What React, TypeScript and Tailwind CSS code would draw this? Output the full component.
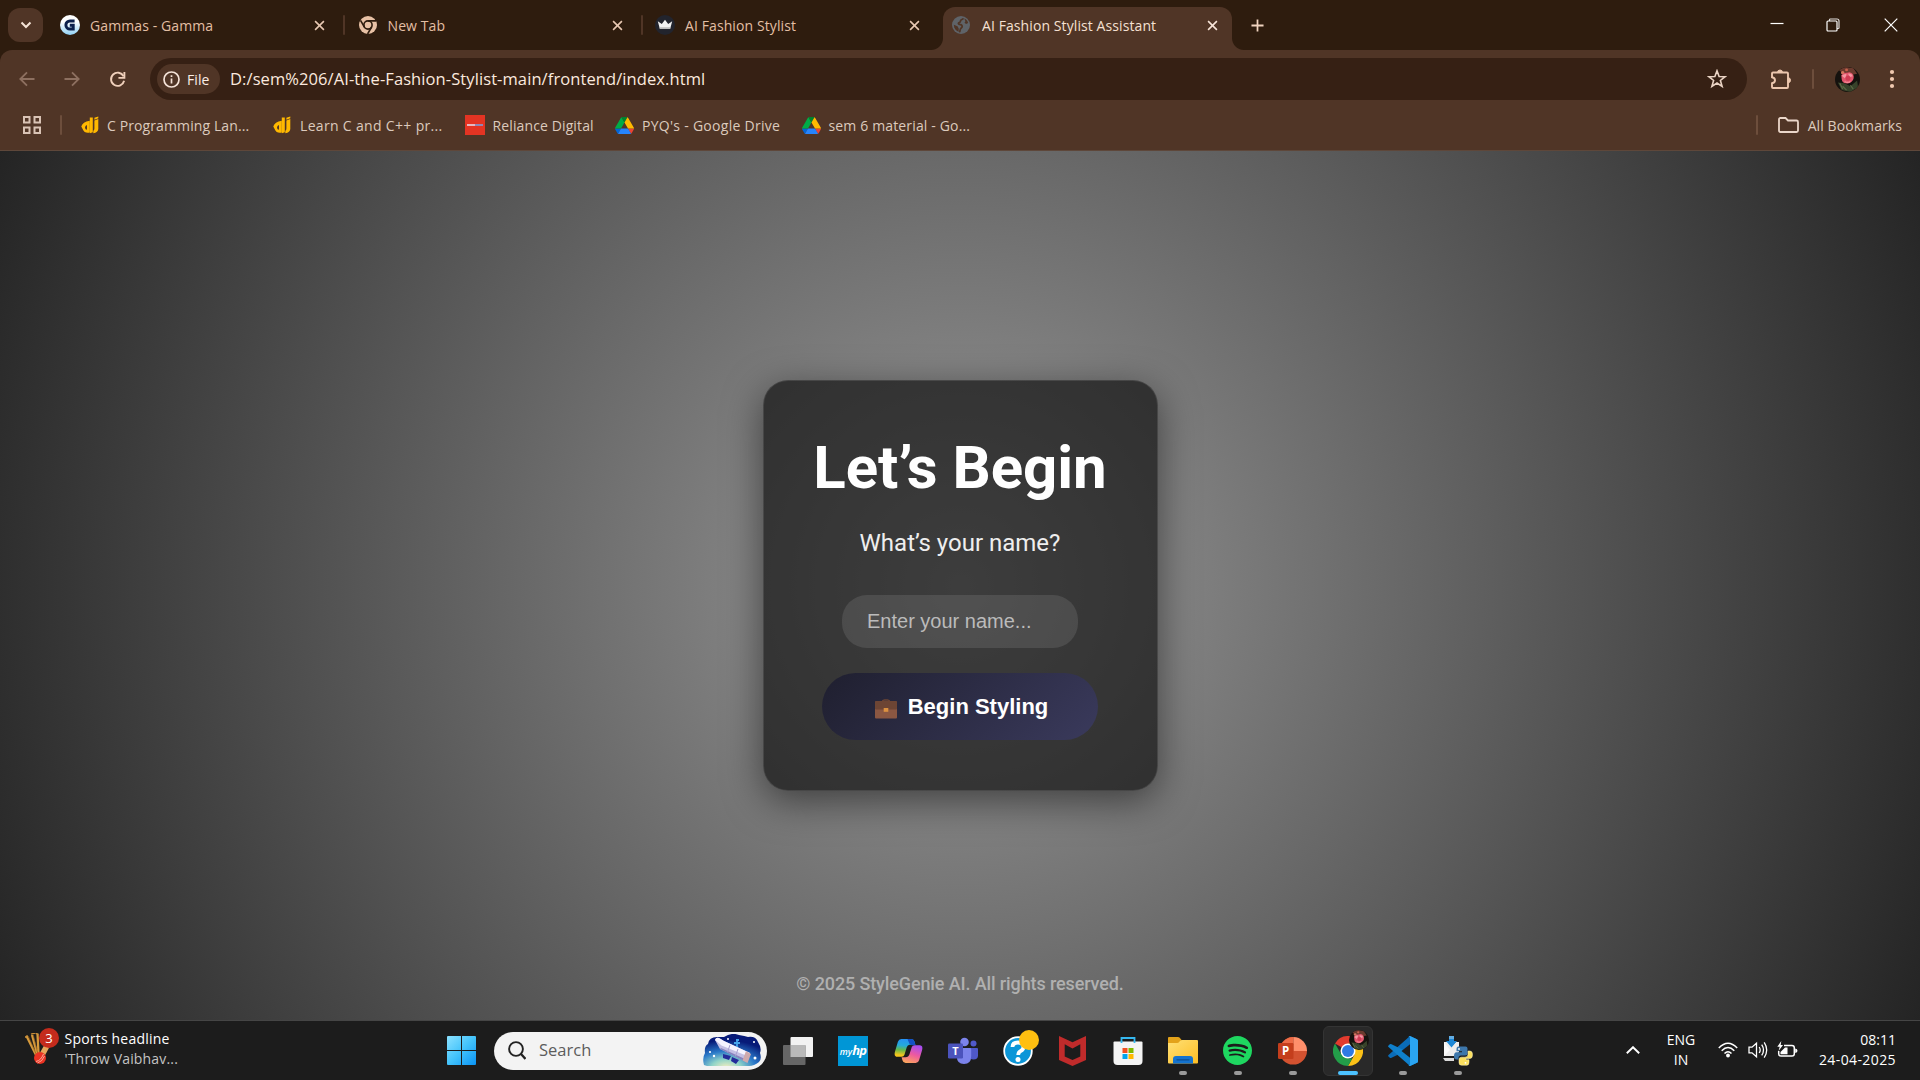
import React from 'react';
import { SiSpotify } from 'react-icons/si';

const CloseX = ({ className = '' }: { className?: string }) => (
  <svg viewBox="0 0 12 12" className={`size-[11px] ${className}`} fill="none" stroke="currentColor" strokeWidth="1.7">
    <path d="M1.2 1.2l9.6 9.6M10.8 1.2L1.2 10.8" />
  </svg>
);

const GammaIcon = () => (
  <svg viewBox="0 0 20 20" className="size-5">
    <defs>
      <linearGradient id="gm" x1="0" y1="0" x2="0" y2="1">
        <stop offset="0.35" stopColor="#fff" />
        <stop offset="1" stopColor="#8fd0f5" />
      </linearGradient>
    </defs>
    <circle cx="10" cy="10" r="10" fill="url(#gm)" />
    <path d="M14.6 5.900H10A4 4 0 0 0 10 14.100H13.200V10.300H9.800" fill="none" stroke="#0b1f4b" strokeWidth="3" />
  </svg>
);

const ChromeMono = () => (
  <svg viewBox="0 0 18 18" className="size-[18px]">
    <circle cx="9" cy="9" r="9" fill="#e8c1a5" />
    <circle cx="9" cy="9" r="4.1" fill="none" stroke="#2e1c0e" strokeWidth="1.6" />
    <path d="M9 4.9h8M5.4 11L1.5 4.3M12.6 11l-4 7" stroke="#2e1c0e" strokeWidth="1.6" />
  </svg>
);

const CrownIcon = () => (
  <svg viewBox="0 0 20 20" className="size-5">
    <circle cx="10" cy="10" r="10" fill="#22242d" />
    <path d="M2.8 6.2L6.8 9 10 4.7 13.2 9l4-2.8-2 7.6H4.8z" fill="#f2f2f2" />
    <path d="M4.5 12.2h11l-.4 1.8H4.9z" fill="#bdbdbd" />
  </svg>
);

const GlobeIcon = () => (
  <svg viewBox="0 0 18 18" className="size-[18px]">
    <circle cx="9" cy="9" r="9" fill="#5f6368" />
    <path
      d="M11.300 2.200C11 3.600 9.500 3.400 8.800 4.300 8.200 5.200 8.700 6.300 7.300 6.600 5.800 6.900 6.300 8.200 7.500 8.400 9.400 8.600 10.300 9.200 10.200 10.600 10.100 12 8.500 12 8.300 13.400 8.200 14.700 8 15.500 7.200 16.200"
      fill="none"
      stroke="#503526"
      strokeWidth="1.700"
    />
    <path d="M1.800 8.800l3.700 1.400 1.300 2.600-.3 3C3.900 14.700 1.900 12.300 1.800 8.800z" fill="#503526" />
    <path d="M12.300 2.500c2 .9 3.300 2.500 3.800 4.600l-2 1-1.600-1.300.9-1.600z" fill="#503526" />
  </svg>
);

type TabProps = { icon: React.ReactNode; title: string; sep?: boolean };
const Tab = ({ icon, title, sep }: TabProps) => (
  <div className="flex h-[50px] w-[297.500px] items-center">
    <div className="flex w-5 justify-center">{icon}</div>
    <div className="ml-2.5 w-[224px] pt-px text-[14px] tracking-[0.100px] text-[#e3bfa4]">{title}</div>
    <CloseX className="mr-px text-[#e8c8b2]" />
    {sep ? <div className="ml-[17px] h-5 w-[2px] rounded bg-[#503526]" /> : null}
  </div>
);

const TabStrip = () => (
  <div className="flex h-[50px] items-center bg-[#2e1c0e]">
    <div className="ml-2 flex h-[34px] w-[35px] items-center justify-center rounded-xl bg-[#503526]">
      <svg viewBox="0 0 12 8" className="h-2 w-3" fill="none" stroke="#f5e3d6" strokeWidth="2">
        <path d="M1.500 1.500L6 6l4.500-4.500" />
      </svg>
    </div>
    <div className="ml-[17px] flex">
      <Tab icon={<GammaIcon />} title="Gammas - Gamma" sep />
      <Tab icon={<ChromeMono />} title="New Tab" sep />
      <Tab icon={<CrownIcon />} title="AI Fashion Stylist" />
    </div>
    <div className="-ml-[22px] flex h-[50px] items-end">
      <div className="h-3 w-3 bg-[radial-gradient(circle_at_0_0,transparent_11.500px,#503526_12.500px)]" />
      <div className="flex h-[43px] w-[289.500px] items-center rounded-t-xl bg-[#503526] pl-[9.500px] pb-[7px]">
        <GlobeIcon />
        <div className="ml-3 w-[224.500px] pt-px text-[14px] tracking-[0.090px] text-[#f5e0d2]">AI Fashion Stylist Assistant</div>
        <CloseX className="text-[#f7e4d8]" />
      </div>
      <div className="h-3 w-3 bg-[radial-gradient(circle_at_100%_0,transparent_11.500px,#503526_12.500px)]" />
    </div>
    <svg viewBox="0 0 14 14" className="ml-[6.500px] size-[13px]" stroke="#f0d3bf" strokeWidth="1.900">
      <path d="M7 .5v13M.5 7h13" />
    </svg>
    <div className="ml-auto mr-[22px] flex items-center text-white">
      <svg viewBox="0 0 14 14" className="size-3.5" stroke="currentColor" strokeWidth="1.200">
        <path d="M.5 5.500h13" />
      </svg>
      <svg viewBox="0 0 14 14" className="ml-[42px] size-3.5" fill="none" stroke="currentColor" strokeWidth="1.200">
        <rect x="1" y="3" width="10" height="10" rx="1" />
        <path d="M3.500 3V1.800q0-.8.8-.8H11q2 0 2 2v6.700q0 .8-.8.8H11" strokeOpacity="0.85" />
      </svg>
      <svg viewBox="0 0 14 14" className="ml-11 size-3.5" stroke="currentColor" strokeWidth="1.200">
        <path d="M.7.7l12.600 12.600M13.300.7L.7 13.300" />
      </svg>
    </div>
  </div>
);

const RosePhoto = ({ className }: { className: string }) => (
  <svg viewBox="0 0 26 26" className={className}>
    <defs>
      <clipPath id="rp">
        <circle cx="13" cy="13" r="13" />
      </clipPath>
    </defs>
    <g clipPath="url(#rp)">
      <rect width="26" height="26" fill="#15120e" />
      <path d="M4 3l6-3 9 1 4 6-5 1-9-1z" fill="#6b3a2e" />
      <path d="M3 16l7 1 6 3 7-6 1 7-8 5-9-2z" fill="#37422a" />
      <path d="M8 20l4 4M16 19l3 4M5 17l3 6" stroke="#5c6b45" strokeWidth="1.200" />
      <circle cx="8" cy="6" r="1.800" fill="#d2765f" />
      <circle cx="12" cy="3" r="1.500" fill="#c4614c" />
      <path d="M6.500 8.500q3-3 6-2.500 4-2 6.500 2 1.500 4-1.500 7-3 3-6 2-4-.5-4.500-4z" fill="#e0566c" />
      <path d="M7 9q3-2.500 5-1.500L10.500 12zM13.500 7q4-1 5 2.500l-3 1z" fill="#f596a0" />
      <circle cx="13.500" cy="11.800" r="2.600" fill="#cf3c54" />
      <path d="M10 15q3 2 6 0" stroke="#f28b97" strokeWidth="1.200" fill="none" />
    </g>
  </svg>
);

const AddressRow = () => (
  <div className="flex h-[58px] items-center bg-[#503526] pl-[19px]">
    <svg viewBox="0 0 16 16" className="size-4 text-[#8d7060]" fill="none" stroke="currentColor" strokeWidth="1.800">
      <path d="M15.500 8H1.500M8 1.300L1.300 8 8 14.700" />
    </svg>
    <svg viewBox="0 0 16 16" className="ml-[29px] size-4 text-[#8d7060]" fill="none" stroke="currentColor" strokeWidth="1.800">
      <path d="M.5 8h14M8 1.300L14.700 8 8 14.700" />
    </svg>
    <svg viewBox="0 0 18 18" className="ml-[29px] size-[17px] text-[#f0d0bb]" fill="none" stroke="currentColor" strokeWidth="2">
      <path d="M15.400 5.500A7 7 0 1 0 16 10.300" />
      <path d="M16.300 1v6.300H10" />
    </svg>
    <div className="ml-6 flex h-[42px] w-[1597px] items-center rounded-full bg-[#362014] pl-[7px]">
      <div className="flex h-[30px] w-[63px] items-center rounded-full bg-[#503526] pl-1.5">
        <svg viewBox="0 0 17 17" className="size-[17px] text-[#f5e3d8]" fill="none" stroke="currentColor" strokeWidth="1.700">
          <circle cx="8.500" cy="8.500" r="7.500" />
          <path d="M8.500 7.500v5M8.500 4.300v1.800" />
        </svg>
        <span className="ml-[7px] text-[14px] font-medium tracking-[0.1px] text-[#fbeee6]">File</span>
      </div>
      <div className="ml-2.5 flex-1 pt-px text-[16.500px] tracking-[0.090px] text-[#fbe9df]">
        D:/sem%206/AI-the-Fashion-Stylist-main/frontend/index.html
      </div>
      <svg viewBox="0 0 20 20" className="mr-5 size-5 text-[#ead3c4]" fill="none" stroke="currentColor" strokeWidth="1.600">
        <path d="M10 1.800l2.100 5.700 6 .2-4.700 3.800 1.700 5.900L10 14l-5.100 3.400 1.700-5.900L1.900 7.700l6-.2z" />
      </svg>
    </div>
    <svg viewBox="0 0 22 22" className="ml-[23px] size-[22px]">
      <path
        d="M3 4.500h14q1 0 1 1V19q0 1-1 1H3q-1 0-1-1v-3.800q3-.5 3-3t-3-3V5.500q0-1 1-1z"
        fill="none"
        stroke="#ecc6ad"
        strokeWidth="1.900"
      />
      <path d="M7.500 4.500a2.500 2.500 0 0 1 5 0zM18 9.700a2.500 2.500 0 0 1 0 5z" fill="#ecc6ad" stroke="#ecc6ad" />
    </svg>
    <div className="ml-5 h-5 w-[2px] rounded bg-[#6d4e3c]" />
    <RosePhoto className="ml-[21px] size-[25px]" />
    <svg viewBox="0 0 6 20" className="ml-[29px] h-5 w-1.5" fill="#f0c9b0">
      <circle cx="3" cy="3" r="2.100" />
      <circle cx="3" cy="10" r="2.100" />
      <circle cx="3" cy="17" r="2.100" />
    </svg>
  </div>
);

const GfgLogo = () => (
  <svg viewBox="0 0 18 18" className="size-[18px]">
    <path d="M8.800 1.500h3v14.800L8.800 17.200z" fill="#ffb800" />
    <path d="M.3 10.500Q1.500 6 8.800 4.800V16.600Q3.500 17.600 2 13.800zM6 9Q4 9.900 4 11.700q.2 2 2 2z" fill="#ffb800" fillRule="evenodd" />
    <path d="M13.400 4.600L17.300 3v10q-.2 3.500-5 4.300v-2.600q1.100-.5 1.100-2.200zM13.400 1.800L17.300.4v1.900l-3.900 1.400z" fill="#ffb800" />
  </svg>
);

const DriveLogo = () => (
  <svg viewBox="0 0 87.300 78" className="h-[17px] w-[19px]">
    <path d="m6.600 66.850 3.850 6.650c.8 1.400 1.950 2.500 3.300 3.300l13.750-23.800h-27.500c0 1.550.4 3.100 1.200 4.500z" fill="#0066da" />
    <path d="m43.650 25-13.750-23.800c-1.350.8-2.500 1.900-3.300 3.300l-25.400 44a9.060 9.060 0 0 0 -1.200 4.500h27.500z" fill="#00ac47" />
    <path d="m73.550 76.800c1.350-.8 2.500-1.900 3.300-3.300l1.600-2.750 7.650-13.250c.8-1.400 1.200-2.950 1.200-4.500h-27.502l5.852 11.500z" fill="#ea4335" />
    <path d="m43.650 25 13.750-23.800c-1.350-.8-2.900-1.200-4.500-1.200h-18.500c-1.600 0-3.150.45-4.500 1.200z" fill="#00832d" />
    <path d="m59.800 53h-32.300l-13.750 23.800c1.350.8 2.900 1.200 4.500 1.200h50.800c1.600 0 3.150-.45 4.500-1.200z" fill="#2684fc" />
    <path d="m73.400 26.500-12.700-22c-.8-1.400-1.950-2.500-3.300-3.300l-13.750 23.800 16.150 28h27.450c0-1.550-.4-3.100-1.200-4.500z" fill="#ffba00" />
  </svg>
);

const BookmarksBar = () => (
  <div className="flex h-[42px] items-center bg-[#503526] pb-2 pl-[23px] text-[14px] text-[#dccabd]">
    <svg viewBox="0 0 18 18" className="size-[18px]" fill="none" stroke="#d9c3b5" strokeWidth="2">
      <path d="M1 1h5.500v5.500H1zM11.500 1H17v5.500h-5.500zM1 11.500h5.500V17H1zM11.500 11.500H17V17h-5.500z" />
    </svg>
    <div className="ml-[19px] h-5 w-[2px] rounded bg-[#6d4e3c]" />
    <div className="ml-[19px] flex w-[192px] items-center">
      <GfgLogo />
      <span className="ml-[8px] tracking-[0.110px]">C Programming Lan...</span>
    </div>
    <div className="flex w-[191.500px] items-center">
      <GfgLogo />
      <span className="ml-[9px] tracking-[0.330px]">Learn C and C++ pr...</span>
    </div>
    <div className="flex w-[150.500px] items-center">
      <div className="flex size-5 items-center justify-center bg-[#e43423]">
        <div className="flex h-[2px] w-4">
          <div className="w-2 bg-[#e9b5bd]" />
          <div className="w-2 bg-[#8f86b5]" />
        </div>
      </div>
      <span className="ml-2 tracking-[0.120px]">Reliance Digital</span>
    </div>
    <div className="flex w-[186.500px] items-center">
      <DriveLogo />
      <span className="ml-2 tracking-[0.280px]">PYQ's - Google Drive</span>
    </div>
    <div className="flex items-center">
      <DriveLogo />
      <span className="ml-2 tracking-[0.150px]">sem 6 material - Go...</span>
    </div>
    <div className="ml-auto mr-[18px] flex items-center">
      <div className="h-5 w-[2px] rounded bg-[#6d4e3c]" />
      <svg viewBox="0 0 21 16" className="ml-5 h-4 w-[21px]" fill="none" stroke="#ead6c9" strokeWidth="1.800">
        <path d="M2.500 1H7.500l2.500 2.500h8.500q1.500 0 1.500 1.500v8.500q0 1.500-1.500 1.500h-16Q1 15 1 13.500v-11Q1 1 2.500 1z" />
      </svg>
      <span className="ml-[9px] tracking-[0.080px]">All Bookmarks</span>
    </div>
  </div>
);

const LoginPage = () => (
  <div className="flex h-[869px] flex-col items-center bg-[radial-gradient(circle_at_center,#999,#242424)] font-['Roboto',sans-serif]">
    <div className="mt-[229px] flex h-[411px] w-[395px] flex-col items-center rounded-[25px] border border-white/10 bg-black/60 pt-[52px] shadow-[0_10px_38px_rgba(0,0,0,0.500)]">
      <h1 className="text-[60px] leading-[70px] font-bold tracking-[-0.050px] whitespace-nowrap text-white">Let’s Begin</h1>
      <p className="mt-[26px] text-[24px] leading-7 text-[#eee]">What’s your name?</p>
      <input
        className="mt-[38px] h-[53px] w-[236px] rounded-[25px] bg-white/10 px-[25px] font-['Liberation_Sans',sans-serif] text-[20px] text-white placeholder:text-[#bbb]"
        placeholder="Enter your name..."
      />
      <button className="mt-[25px] flex h-[67px] w-[276px] items-center justify-center gap-[10px] rounded-[37px] bg-linear-[135deg,#1f1f2f,#3a3a5c] pl-0.5 font-['Liberation_Sans',sans-serif] text-[22px] font-bold text-white">
        <svg viewBox="0 0 24 20" className="mt-1 h-5 w-6">
          <path d="M8 3Q8.500 1 10.500 1h3Q15.500 1 16 3" fill="none" stroke="#6d4534" strokeWidth="1.400" />
          <rect x="1" y="2.500" width="22" height="17" rx="1" fill="#8b5742" />
          <path d="M2 2h20q1 0 1 1v6.500q0 1-1 1H2q-1 0-1-1V3q0-1 1-1z" fill="#6d4534" />
          <rect x="9.700" y="9" width="4.600" height="3.800" fill="#dc9140" />
        </svg>
        Begin Styling
      </button>
    </div>
    <div className="mt-auto mb-[26px] text-[18px] leading-[21px] font-medium tracking-[-0.120px] text-[#b0b0b0]">
      © 2025 StyleGenie AI. All rights reserved.
    </div>
  </div>
);

type AppProps = { children: React.ReactNode; running?: boolean; active?: boolean };
const TaskApp = ({ children, running, active }: AppProps) => (
  <div
    className={
      active
        ? 'relative flex size-[50px] items-center justify-center rounded-md border border-[#343434] bg-[#292929]'
        : 'relative flex size-[50px] items-center justify-center'
    }
  >
    {children}
    {running ? <div className="absolute bottom-px left-[21px] h-1 w-2 rounded-full bg-[#9a9a9a]" /> : null}
    {active ? <div className="absolute bottom-0 left-[14px] h-1 w-5 rounded-full bg-[#4cc2ff]" /> : null}
  </div>
);

const WindowsLogo = () => (
  <svg viewBox="0 0 29 29" className="size-[29px]">
    <defs>
      <linearGradient id="wl" x1="0" y1="0" x2="1" y2="1">
        <stop offset="0" stopColor="#8ce2ff" />
        <stop offset="0.500" stopColor="#43c3fb" />
        <stop offset="1" stopColor="#0a93f5" />
      </linearGradient>
    </defs>
    <path d="M1 0h13v14H0V1q0-1 1-1zM15 0h13q1 0 1 1v13H15zM0 15h14v14H1q-1 0-1-1zM15 15h14v13q0 1-1 1H15z" fill="url(#wl)" />
  </svg>
);

const Telescope = () => (
  <svg viewBox="0 0 58 33" className="h-[33px] w-[58px]">
    <defs>
      <radialGradient id="ts" cx="0.400" cy="1.050" r="0.850">
        <stop offset="0" stopColor="#f6efc0" />
        <stop offset="0.300" stopColor="#8fd3c8" />
        <stop offset="0.600" stopColor="#2a79c9" />
        <stop offset="1" stopColor="#071a78" />
      </radialGradient>
    </defs>
    <path d="M1 31Q-1 24 2 19 1 12 5 10 6 3 14 3q5 0 7 0Q29-2 36 1q6 1 9 2 8-1 10 5 4 6 2 11 2 6-1 9-5 4-10 4H4z" fill="url(#ts)" />
    <path d="M34 5v8M31 9h6M33 6h3" stroke="#45a5ec" strokeWidth="1.800" />
    <path d="M12 6q1-3 4-2l5 3 26 12-3 9-27-13z" fill="#c3bfe4" />
    <path d="M12 6q1-3 4-2l5 3 26 12-1.500 3.500-27-11z" fill="#f5f3ff" />
    <path d="M18 14l24 11-.7 2L17 15z" fill="#8783bf" />
    <path d="M43 17l5 3-3.500 9-5-2.500z" fill="#cfa9ad" />
    <path d="M27 11l-2.500 7M35 15l-2.500 7" stroke="#a69fce" />
    <path d="M20 20l8 2-2 4-6-2zM29 23l7 3-3 4-5-3z" fill="#242b9a" />
    <g fill="#fff">
      <circle cx="7" cy="18" r="1.100" />
      <circle cx="11" cy="22" r="1.200" />
      <circle cx="52" cy="24" r="1.500" />
      <circle cx="51" cy="8" r="1" />
      <circle cx="25" cy="5" r="1" />
    </g>
  </svg>
);

const TaskView = () => (
  <svg viewBox="0 0 30 28" className="h-7 w-[30px]">
    <rect x="7.500" width="22.500" height="20" rx="1" fill="#f2f2f2" />
    <rect y="8" width="22.500" height="20" rx="1" fill="#666" />
    <path d="M7.500 8h15v12h-15z" fill="#b9b9b9" />
  </svg>
);

const Copilot = () => (
  <svg viewBox="0 0 30 27" className="h-[26px] w-[29px]">
    <defs>
      <linearGradient id="c1" x1="0.300" y1="0" x2="0.200" y2="1">
        <stop offset="0" stopColor="#2593f5" />
        <stop offset="0.350" stopColor="#25aadb" />
        <stop offset="0.600" stopColor="#63b84c" />
        <stop offset="0.900" stopColor="#f5c51c" />
      </linearGradient>
      <linearGradient id="c2" x1="0.700" y1="0" x2="0.300" y2="1">
        <stop offset="0" stopColor="#a64df2" />
        <stop offset="0.500" stopColor="#ee5a9f" />
        <stop offset="1" stopColor="#fba55d" />
      </linearGradient>
    </defs>
    <path d="M7.500 1H18q2.500 0 3.300 3l.9 3H16q-2 0-2.800 2.600l-2.400 7.800Q10 19.500 8 19.500H3.500Q-.5 19.500 1 14L4 4Q5 1 7.500 1z" fill="url(#c1)" />
    <path d="M14 1h4q2.500 0 3.300 3l1 3.500h-4Q16 7.500 15.300 4.500z" fill="#1450c4" />
    <path d="M22.500 26H12q-2.500 0-3.300-3l-.9-3H12q3 0 4-3l2.500-7.800Q19.200 7.500 21.500 7.500h5Q30.500 7.500 29 13l-3 10q-1 3-3.500 3z" fill="url(#c2)" />
  </svg>
);

const Teams = () => (
  <svg viewBox="0 0 30 28" className="h-7 w-[30px]">
    <circle cx="25.500" cy="6.500" r="3" fill="#5059c9" />
    <path d="M20 11h9q1 0 1 1v6.500q0 4-4.500 4-4 0-5.500-4z" fill="#4f58c8" />
    <circle cx="16.500" cy="5" r="4.300" fill="#7b83eb" />
    <path d="M10 11h12q1.200 0 1.200 1.200V19q0 8-7.200 8t-7.200-8v-7z" fill="#7b83eb" />
    <rect y="6.500" width="15" height="15" rx="1.200" fill="#4b53bc" />
    <text x="7.500" y="18" textAnchor="middle" fontSize="11" fontWeight="700" fill="#fff" fontFamily="Open Sans">T</text>
  </svg>
);

const HelpIcon = () => (
  <div className="relative">
    <svg viewBox="0 0 30 30" className="size-[30px]">
      <circle cx="15" cy="15" r="13.800" fill="#0c96d8" stroke="#fff" strokeWidth="1.800" />
      <path d="M9.500 11Q9.500 6.500 15 6.500t5.500 4.500q0 2.500-3 4.200Q15.200 16.500 15.200 19" fill="none" stroke="#fff" strokeWidth="3.800" />
      <circle cx="15" cy="23.500" r="2.500" fill="#fff" />
    </svg>
    <div className="absolute -top-[6px] left-4 size-5 rounded-full bg-[#ffbf10]" />
  </div>
);

const McAfee = () => (
  <svg viewBox="0 0 27 30" className="mr-px h-[30px] w-[27px]">
    <path d="M0 0L13.500 6.300 27 0v24l-13.500 6L0 24zM5.700 8.200v12.300l7.800 3.600 7.800-3.600V8.200l-7.800 4.200z" fill="#c02b2b" fillRule="evenodd" />
  </svg>
);

const StoreIcon = () => (
  <svg viewBox="0 0 30 30" className="mr-px size-[30px]">
    <path d="M1.500 5.500h27q1 0 1 1V25q0 4-4 4h-21q-4 0-4-4V6.500q0-1 1-1z" fill="#f4f4f4" />
    <path d="M9.500 12h5v5h-5z" fill="#f25022" />
    <path d="M15.500 12h5v5h-5z" fill="#7fba00" />
    <path d="M9.500 18h5v5h-5z" fill="#00a4ef" />
    <path d="M15.500 18h5v5h-5z" fill="#ffb900" />
    <path d="M8.500 7V2h13v5" fill="none" stroke="#35b8f0" strokeWidth="1.800" />
  </svg>
);

const Explorer = () => (
  <svg viewBox="0 0 30 27" className="h-[27px] w-[30px]">
    <defs>
      <linearGradient id="ex" x1="0" y1="0" x2="1" y2="1">
        <stop offset="0" stopColor="#ffe076" />
        <stop offset="1" stopColor="#fdbe24" />
      </linearGradient>
    </defs>
    <path d="M1 0h9q1 0 1.700.8L14 3.500V8H0V1q0-1 1-1z" fill="#e3a21a" />
    <path d="M0 6h9q1.500 0 2.500-1.500Q12.500 3 14 3h15q1 0 1 1v21.500q0 1-1 1H1q-1 0-1-1z" fill="url(#ex)" />
    <path d="M5 26.500V22q0-3 3-3h14q3 0 3 3v4.500z" fill="#1473cf" />
    <path d="M9 22.800h12" stroke="#0b4f94" strokeWidth="1.300" strokeLinecap="round" />
  </svg>
);

const PowerPoint = () => (
  <svg viewBox="0 0 29 28" className="mr-px h-7 w-[29px]">
    <path d="M15.500 0A13.800 13.800 0 1 0 29 14H15.500z" fill="#d35230" />
    <path d="M15.500 0A13.800 13.800 0 0 0 2.500 9l2 5h11z" fill="#ed6c47" />
    <path d="M15.500 0A13.800 13.800 0 0 1 29 14H15.500z" fill="#ff8f6b" />
    <rect y="6" width="15.500" height="16" rx="1.200" fill="#c43e1c" />
    <text x="7.500" y="18" textAnchor="middle" fontSize="11.500" fontWeight="700" fill="#fff" fontFamily="Open Sans">P</text>
  </svg>
);

const ChromeColor = () => (
  <div className="relative">
    <svg viewBox="0 0 30 30" className="size-[30px]">
      <path d="M15 15L2 7.500A15 15 0 0 1 28 7.500H15z" fill="#e33b2e" />
      <path d="M15 7.500h13A15 15 0 0 1 15 30l6.500-11.200z" fill="#fbc117" />
      <path d="M2 7.500l6.500 11.300L15 22.500h4.300L15 30A15 15 0 0 1 2 7.500z" fill="#239d49" />
      <circle cx="15" cy="15" r="7.500" fill="#fff" />
      <circle cx="15" cy="15" r="6" fill="#2f7ae5" />
    </svg>
    <RosePhoto className="absolute -top-[6px] left-4 size-5" />
  </div>
);

const VSCode = () => (
  <svg viewBox="0 0 30 30" className="size-[30px]">
    <path d="M22 0L29 3.200q1 .5 1 1.600V9L3.500 21.800q-1 .6-1.700-.1L.5 20.500q-.8-.8 0-1.600z" fill="#0a6cb8" />
    <path d="M22 30l7-3.200q1-.5 1-1.600V21L3.500 8.200q-1-.6-1.700.1L.5 9.500q-.8.800 0 1.600z" fill="#0f80cc" />
    <path d="M22 0l7 3.200q1 .5 1 1.600v20.400q0 1.100-1 1.600L22 30q-1 0-1.700-.8 1.500.6 1.700-1V1.800q-.2-1.600-1.700-1Q21 0 22 0z" fill="#2aa5f2" />
    <path d="M22 8.200L13.500 15l8.500 6.800z" fill="#1d1d1d" />
  </svg>
);

const PythonInstaller = () => (
  <svg viewBox="0 0 30 30" className="size-[30px]">
    <path d="M1 6h6l1.500 4L13 6h3v10L12 20H1z" fill="#ededed" />
    <path d="M1 6l6 8-6 6z" fill="#fafafa" />
    <path d="M0 22h11v3H2z" fill="#d9d9d9" />
    <path d="M6 0h5v5h3l-5.500 6.500L3 5h3z" fill="#1c87d6" />
    <path d="M6 0h5M6 2h5" stroke="#cfe8fa" strokeWidth="0.800" />
    <path d="M15.500 10.500h7q2 0 2 2v4.500q0 2.500-2.500 2.500h-4q-2.500 0-2.500 2.500v1.500h-2q-2.500 0-2.500-3.500t2.500-3.700h5.500v-1h-5.500v-2q0-2.800 2-2.800z" fill="#3d77ab" />
    <path d="M25 15h2q2.500 0 2.500 3.700T27 22.500h-4v1.200h3v2.500q0 3-2 3h-5.500q-2.500 0-2.500-2.500v-3q0-2.500 2.500-2.500H22q3 0 3-3z" fill="#fbdf5e" stroke="#fdf4c4" strokeWidth="0.500" />
    <circle cx="16" cy="13" r="0.900" fill="#fff" />
    <circle cx="22.500" cy="26.800" r="0.900" fill="#fff" />
  </svg>
);

const CricketIcon = () => (
  <div className="relative mb-[5px] h-[30px] w-[30px]">
    <svg viewBox="0 0 30 32" className="h-8 w-[30px]">
      <path d="M1.500 3l10 20M7 2l5.500 20M12.500 1l1 19" stroke="#d69a3c" strokeWidth="2.300" />
      <path d="M3.300 3l8.700 20M8.300 2l4.600 19" stroke="#8a5a1c" strokeWidth="0.700" />
      <path d="M0 4.500l2.500-2M6 1.200l4-1.200M10.500.3l3 .9" stroke="#c78d3a" strokeWidth="1.400" />
      <path d="M20.500 10l4.500 3-7.500 14-5-3z" fill="#e5a65a" />
      <circle cx="15" cy="25" r="6" fill="#ea3323" />
      <path d="M11 28.500q5-1 7.500-7.500M12.500 30q5-1.500 7-7" stroke="#ffb5a5" strokeWidth="0.900" fill="none" />
    </svg>
    <div className="absolute -top-[5px] left-[14px] flex size-5 items-center justify-center rounded-full bg-[#c42b1c] text-[13px] leading-none text-white">3</div>
  </div>
);

const Taskbar = () => (
  <div className="relative flex h-[60px] items-center border-t border-[#454545] bg-[#1c1c1c]">
    <div className="ml-[25px] flex w-[411px] items-center">
      <CricketIcon />
      <div className="ml-[9.500px] pb-[3px] text-[14px] leading-5">
        <div className="tracking-[0.200px] text-white">Sports headline</div>
        <div className="tracking-[0.170px] text-[#c4c4c4]">'Throw Vaibhav...</div>
      </div>
    </div>
    <div className="flex w-[58px] justify-center pr-[7px]">
      <WindowsLogo />
    </div>
    <div className="flex h-[38px] w-[273px] items-center rounded-full bg-[#f3f3f3] pl-[14px]">
      <svg viewBox="0 0 18 19" className="h-[19px] w-[18px]" fill="none" stroke="#222" strokeWidth="1.900">
        <circle cx="8" cy="8" r="6.900" />
        <path d="M12.800 12.800l4.700 5.200" strokeWidth="2.300" />
      </svg>
      <span className="ml-[13px] w-[164px] text-[16.500px] text-[#5c5c5c]">Search</span>
      <Telescope />
    </div>
    <div className="ml-[6px] flex items-center gap-[5px]">
      <TaskApp><TaskView /></TaskApp>
      <TaskApp>
        <div className="flex size-[30px] items-center justify-center bg-[#0096d6] pt-px leading-none text-white italic">
          <span className="text-[9px] font-semibold">my</span>
          <span className="-mt-px text-[13px] font-bold tracking-[-0.800px]">hp</span>
        </div>
      </TaskApp>
      <TaskApp><Copilot /></TaskApp>
      <TaskApp><Teams /></TaskApp>
      <TaskApp><HelpIcon /></TaskApp>
      <TaskApp><McAfee /></TaskApp>
      <TaskApp><StoreIcon /></TaskApp>
      <TaskApp running><Explorer /></TaskApp>
      <TaskApp running><SiSpotify className="mr-px size-[29px] text-[#1ed760]" /></TaskApp>
      <TaskApp running><PowerPoint /></TaskApp>
      <TaskApp active><ChromeColor /></TaskApp>
      <TaskApp running><VSCode /></TaskApp>
      <TaskApp running><PythonInstaller /></TaskApp>
    </div>
    <div className="ml-auto mr-6 flex items-center pb-[2px] text-[14px] leading-5 text-white">
      <svg viewBox="0 0 14 8" className="h-2 w-3.5" fill="none" stroke="currentColor" strokeWidth="1.900">
        <path d="M.8 7.300L7 1.200l6.200 6.100" />
      </svg>
      <div className="ml-[26px] w-[30px] text-center">
        <div>ENG</div>
        <div>IN</div>
      </div>
      <svg viewBox="0 0 20 16" className="ml-[22px] h-4 w-5" fill="none" stroke="currentColor" strokeWidth="1.500">
        <path d="M.8 6q9.200-9.500 18.400 0M3.700 8.800q6.300-6.500 12.600 0M6.500 11.500q3.500-3.600 7 0" />
        <circle cx="10" cy="13.500" r="1.900" fill="currentColor" stroke="none" />
      </svg>
      <svg viewBox="0 0 20 18" className="ml-[10px] h-[18px] w-5" fill="none" stroke="currentColor" strokeWidth="1.300">
        <path d="M1 6.200h3L8.500 2.200v13.600L4 11.800H1zM11.200 6q2 3 0 6M13.700 3.600q3.600 5.400 0 10.800M16.200 1.400q5 7.600 0 15.200" />
      </svg>
      <svg viewBox="0 0 21 18" className="ml-[9px] h-[18px] w-[21px]">
        <path d="M7 4.500h8q2.300 0 2.300 2.300v5.900q0 2.300-2.300 2.300H4q-2.300 0-2.300-2.300V10" fill="none" stroke="#fff" strokeWidth="1.500" />
        <path d="M18.200 7.500q2.300.3 2.300 2.300t-2.300 2.300zM3.500 13.200V11L8 6.500h2.500v6.700zM4.300 0L.3 5.800h2.400L1.500 10 6 4H3.700z" fill="#fff" />
      </svg>
      <div className="ml-[19px] w-[79px] text-right">
        <div>08:11</div>
        <div className="tracking-[0.400px]">24-04-2025</div>
      </div>
    </div>
  </div>
);

export default function App() {
  return (
    <div className="flex h-[1080px] w-[1920px] flex-col overflow-hidden bg-[#2e1c0e] font-['Open_Sans',sans-serif]">
      <TabStrip />
      <div className="overflow-hidden rounded-t-xl">
        <AddressRow />
        <BookmarksBar />
      </div>
      <div className="h-px bg-[#5e473a]" />
      <LoginPage />
      <Taskbar />
    </div>
  );
}
